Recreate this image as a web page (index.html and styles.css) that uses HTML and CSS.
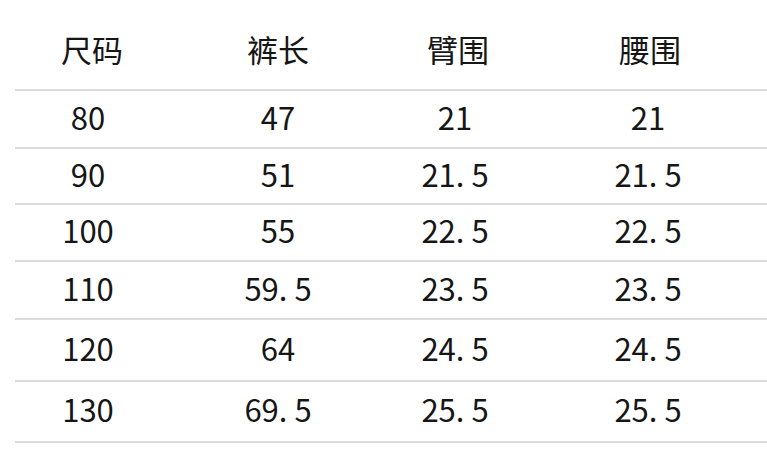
FILE: index.html
```html
<!DOCTYPE html>
<html lang="zh">
<head>
<meta charset="utf-8">
<link rel="stylesheet" href="styles.css">
</head>
<body>
<div class="table">
  <div class="row head"><span>尺码</span><span>裤长</span><span>臂围</span><span>腰围</span></div>
  <div class="row r1"><span>80</span><span>47</span><span>21</span><span>21</span></div>
  <div class="row r2"><span>90</span><span>51</span><span>21. 5</span><span>21. 5</span></div>
  <div class="row r3"><span>100</span><span>55</span><span>22. 5</span><span>22. 5</span></div>
  <div class="row r4"><span>110</span><span>59. 5</span><span>23. 5</span><span>23. 5</span></div>
  <div class="row r5"><span>120</span><span>64</span><span>24. 5</span><span>24. 5</span></div>
  <div class="row r6"><span>130</span><span>69. 5</span><span>25. 5</span><span>25. 5</span></div>
</div>
</body>
</html>
```
FILE: styles.css
```css
html, body {
  margin: 0;
  padding: 0;
  background: #ffffff;
}
body {
  width: 767px;
  height: 461px;
  overflow: hidden;
  font-family: "Noto Sans CJK SC", "Noto Sans", sans-serif;
  color: #161616;
}
.table {
  display: flex;
  flex-direction: column;
  padding-left: 15px;
}
.row {
  display: grid;
  grid-template-columns: 146px 234px 120px 266px;
  align-items: center;
  border-bottom: 2px solid #dcdcdc;
  box-sizing: border-box;
  font-size: 31px;
  line-height: 1;
  padding-bottom: 6px;
}
.row span {
  text-align: center;
}
.head { height: 91px; padding-top: 8px; padding-bottom: 0; }
.r1 { height: 58px; }
.r2 { height: 56px; }
.r3 { height: 57px; }
.r4 { height: 58px; }
.r5 { height: 62px; }
.r6 { height: 61px; }
.head span:nth-child(1) { padding-left: 8px; }
.head span:nth-child(3) { padding-left: 6px; }
.head span:nth-child(4) { padding-left: 4px; }
```
